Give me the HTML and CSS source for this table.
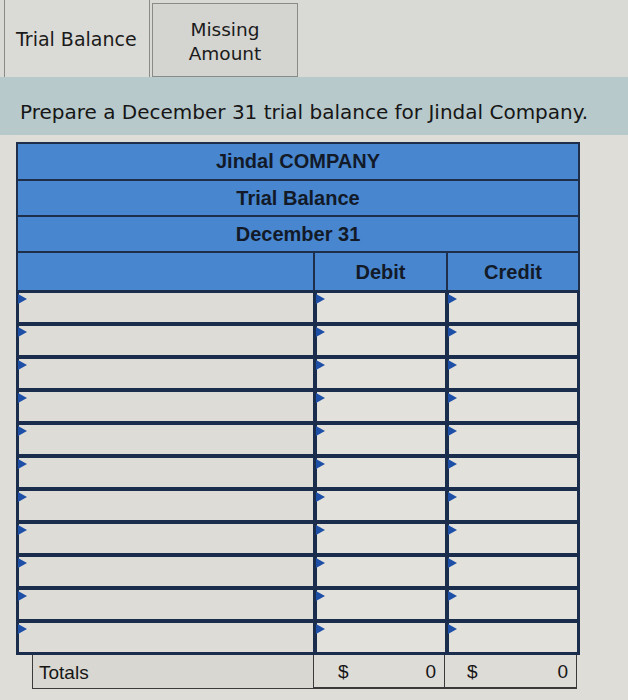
FILE: index.html
```html
<!DOCTYPE html>
<html>
<head>
<meta charset="utf-8">
<link rel="stylesheet" href="styles.css">
</head>
<body>
<div class="tabs">
  <div class="tab active">Trial Balance</div>
  <div class="tab">Missing<br>Amount</div>
</div>
<div class="prompt">Prepare a December 31 trial balance for Jindal Company.</div>
<div class="content">
  <div class="sheet">
    <div class="title-row">Jindal COMPANY</div>
    <div class="title-row">Trial Balance</div>
    <div class="title-row">December 31</div>
    <div class="col-head">
      <div class="ch"></div>
      <div class="ch">Debit</div>
      <div class="ch">Credit</div>
    </div>
    <div class="entries">
      <div class="cell"></div><div class="cell"></div><div class="cell"></div>
      <div class="cell"></div><div class="cell"></div><div class="cell"></div>
      <div class="cell"></div><div class="cell"></div><div class="cell"></div>
      <div class="cell"></div><div class="cell"></div><div class="cell"></div>
      <div class="cell"></div><div class="cell"></div><div class="cell"></div>
      <div class="cell"></div><div class="cell"></div><div class="cell"></div>
      <div class="cell"></div><div class="cell"></div><div class="cell"></div>
      <div class="cell"></div><div class="cell"></div><div class="cell"></div>
      <div class="cell"></div><div class="cell"></div><div class="cell"></div>
      <div class="cell"></div><div class="cell"></div><div class="cell"></div>
      <div class="cell"></div><div class="cell"></div><div class="cell"></div>
    </div>
    <div class="totals">
      <div class="t-label">Totals</div>
      <div class="t-amt"><span>$</span><span>0</span></div>
      <div class="t-amt"><span>$</span><span>0</span></div>
    </div>
  </div>
</div>
</body>
</html>
```

FILE: styles.css
```css
html, body {
  margin: 0;
  padding: 0;
  background: #dfddd7;
}
body {
  width: 628px;
  height: 700px;
  overflow: hidden;
  font-family: "DejaVu Sans", Verdana, sans-serif;
  color: #1b1b1b;
}
.tabs {
  display: flex;
  height: 77px;
  padding-left: 4px;
  background: #d9d9d5;
  align-items: flex-end;
}
.tab {
  width: 146px;
  height: 74px;
  box-sizing: border-box;
  display: flex;
  align-items: center;
  justify-content: center;
  text-align: center;
  font-size: 18.5px;
  line-height: 24px;
  padding-top: 4px;
  background: #d4d4d0;
  border: 1px solid #8a8a88;
  border-bottom: none;
}
.tab.active {
  height: 77px;
  border-top: none;
  background: #dadad6;
  justify-content: flex-start;
  padding-left: 11px;
  padding-top: 0;
  font-size: 19px;
}
.tab + .tab {
  margin-left: 2px;
  border-bottom: 1px solid #8a8a88;
}
.prompt {
  height: 58px;
  box-sizing: border-box;
  padding: 21px 0 0 20px;
  background: #b8c9cc;
  font-size: 20px;
  line-height: 28px;
  color: #161616;
}
.content {
  padding: 7px 0 0 16px;
}
.sheet {
  width: 564px;
  font-family: "Liberation Sans", Arial, sans-serif;
}
.title-row {
  height: 36px;
  box-sizing: border-box;
  display: flex;
  align-items: center;
  justify-content: center;
  background: #4886d0;
  border: 2px solid #1d2f4a;
  border-bottom: none;
  font-weight: bold;
  font-size: 20px;
  color: #121a28;
}
.title-row:first-child {
  height: 37px;
}
.col-head {
  display: grid;
  grid-template-columns: 1fr 133px 132px;
  height: 37px;
  background: #4886d0;
  border: 2px solid #1d2f4a;
  border-bottom: none;
}
.ch {
  display: flex;
  align-items: center;
  justify-content: center;
  font-weight: bold;
  font-size: 20px;
  color: #121a28;
  padding-top: 2px;
}
.ch + .ch {
  border-left: 2px solid #1d2f4a;
}
.entries {
  display: grid;
  grid-template-columns: 1fr 128px 128px;
  grid-auto-rows: 29px;
  gap: 4px;
  padding: 3px;
  background: #1b2d4c;
}
.cell {
  position: relative;
  background: #dddcd7;
}
.cell:nth-child(3n+2), .cell:nth-child(3n) {
  background: #e2e1db;
}
.cell::before {
  content: "";
  position: absolute;
  left: -1px;
  top: 1px;
  width: 0;
  height: 0;
  border-top: 5px solid transparent;
  border-bottom: 5px solid transparent;
  border-left: 9px solid #1d4fa6;
}
.totals {
  display: grid;
  grid-template-columns: 1fr 132px 132px;
  height: 33px;
  margin-left: 16px;
  margin-right: 3px;
  background: #d8d7d1;
  border-left: 1px solid #3a3a3a;
  border-bottom: 1px solid #3a3a3a;
  font-size: 19px;
  color: #161616;
}
.t-label {
  display: flex;
  align-items: center;
  padding-left: 6px;
  padding-top: 2px;
}
.t-amt {
  display: flex;
  align-items: center;
  justify-content: space-between;
  padding: 2px 8px 0 24px;
  border-left: 1px solid #3a3a3a;
  border-right: 1px solid #3a3a3a;
  border-bottom: 2px solid #3a3a3a;
  margin-bottom: -1px;
  background: #dedcd6;
}
.t-amt + .t-amt {
  border-left: none;
  padding-left: 22px;
}
```
